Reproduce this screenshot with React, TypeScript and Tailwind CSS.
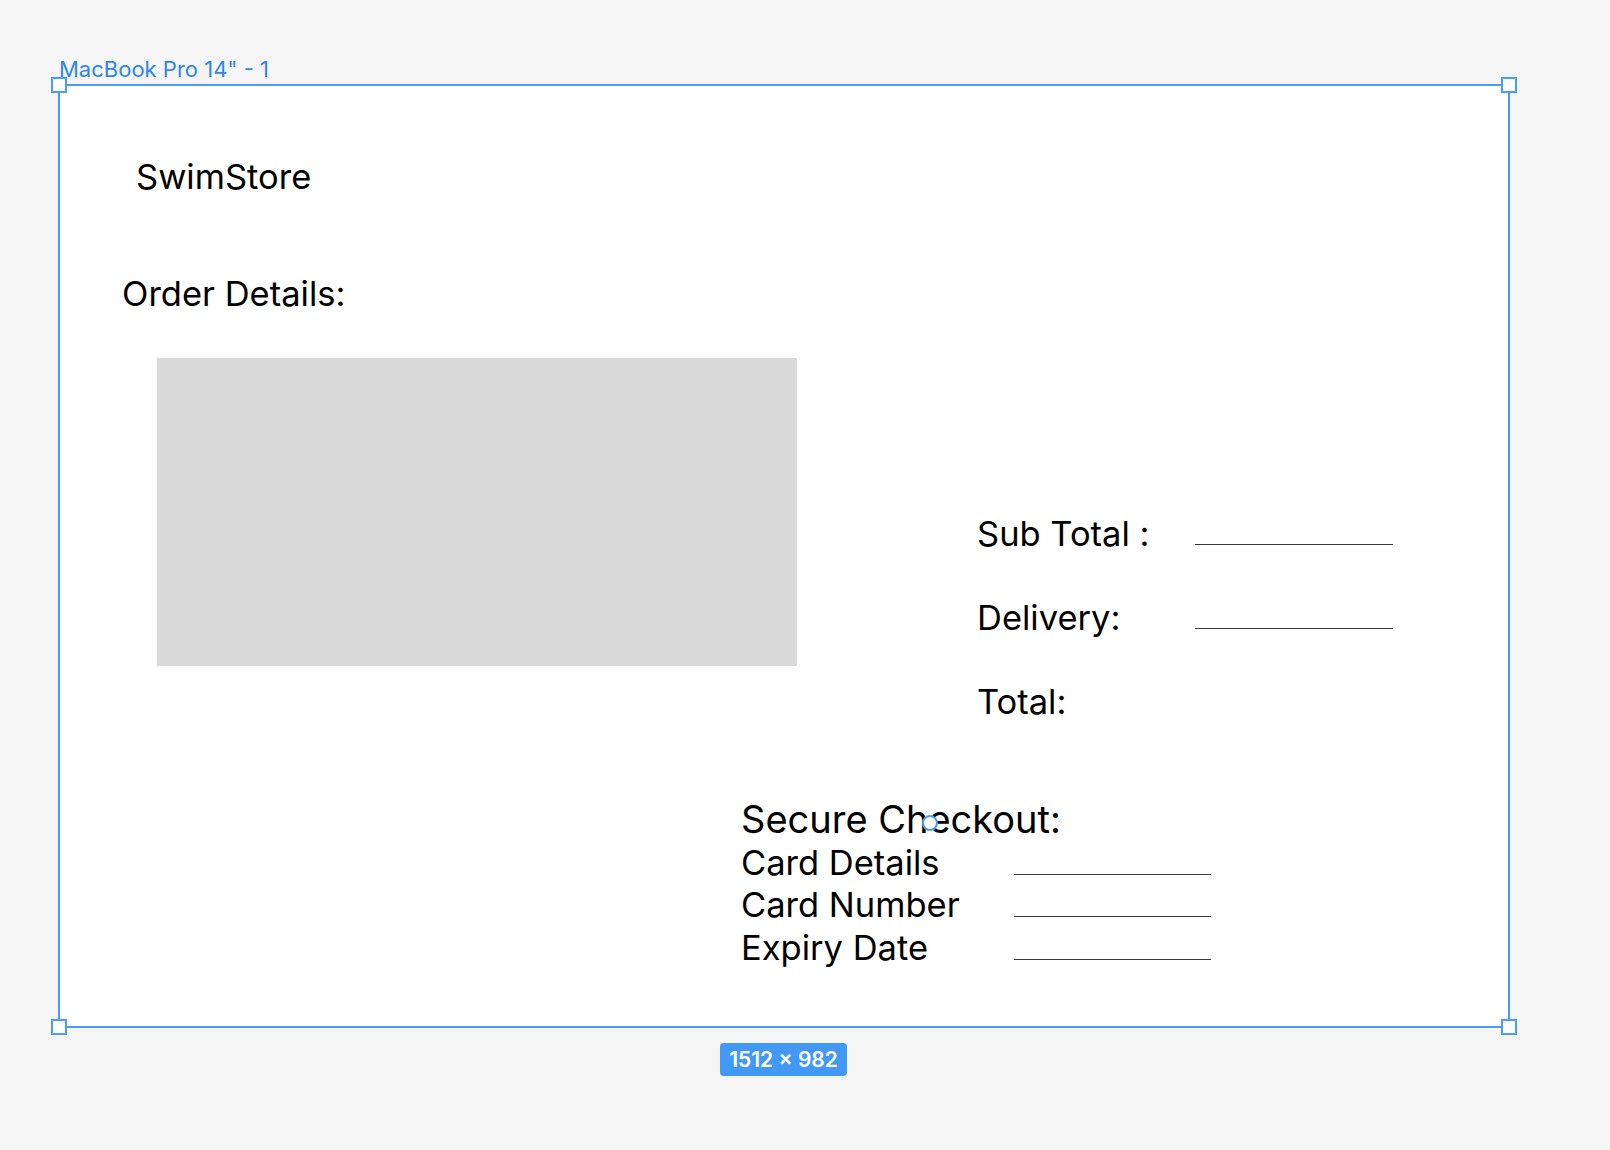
const font = { fontFamily: 'Inter, "Noto Sans", sans-serif' };

function Handle({ className }: { className: string }) {
  return (
    <div
      className={`absolute w-[16px] h-[16px] bg-white border-2 border-[#4a9df7] ${className}`}
    />
  );
}

function SummaryRow({ label, line }: { label: string; line?: boolean }) {
  return (
    <div className="flex items-end h-[40px]">
      <span className="w-[218px] text-[34.5px] leading-[40px] text-black">{label}</span>
      {line && <div className="w-[198px] h-px bg-[#3a3a3a] mb-[9px]" />}
    </div>
  );
}

function CardRow({ label }: { label: string }) {
  return (
    <div className="flex items-end h-[42.5px]">
      <span className="w-[273px] text-[34.5px] leading-[42px] text-black">{label}</span>
      <div className="w-[197px] h-px bg-[#3a3a3a] mb-[9px]" />
    </div>
  );
}

export default function App() {
  return (
    <div className="min-h-[1150px] w-[1610px] bg-[#f5f5f5] pt-[56px] flex flex-col" style={font}>
      <div className="ml-[59px] h-[28px] text-[22px] leading-[26px] text-[#2f86eb]">
        MacBook Pro 14" - 1
      </div>

      <div className="relative ml-[58px] w-[1452px] h-[944px] bg-white border-2 border-[#4a9df7]">
        <Handle className="-left-[9px] -top-[9px]" />
        <Handle className="-right-[9px] -top-[9px]" />
        <Handle className="-left-[9px] -bottom-[9px]" />
        <Handle className="-right-[9px] -bottom-[9px]" />

        <div className="flex flex-col">
          <div className="mt-[71px] ml-[76px] text-[34.5px] leading-[40px] text-black">SwimStore</div>
          <div className="mt-[77px] ml-[62px] text-[34.5px] leading-[40px] text-black">Order Details:</div>

          <div className="flex mt-[44px]">
            <div className="ml-[97px] w-[640px] h-[308px] bg-[#d9d9d9]" />
            <div className="ml-[180px] mt-[156px] flex flex-col gap-[44px]">
              <SummaryRow label="Sub Total :" line />
              <SummaryRow label="Delivery:" line />
              <SummaryRow label="Total:" />
            </div>
          </div>

          <div className="ml-[681px] mt-[76px] flex flex-col">
            <div className="text-[38px] leading-[42px] text-black">Secure Checkout:</div>
            <div className="mt-[1px]">
              <CardRow label="Card Details" />
              <CardRow label="Card Number" />
              <CardRow label="Expiry Date" />
            </div>
          </div>
        </div>

        <div className="absolute left-[862px] top-[729px] w-[16px] h-[16px] rounded-full bg-white border-[2.5px] border-[#4a9df7]" />
      </div>

      <div className="mt-[15px] self-start ml-[720px] w-[127px] h-[33px] rounded-[4px] bg-[#4299f5] flex items-center justify-center text-white text-[21px] font-semibold">
        1512 × 982
      </div>
    </div>
  );
}
